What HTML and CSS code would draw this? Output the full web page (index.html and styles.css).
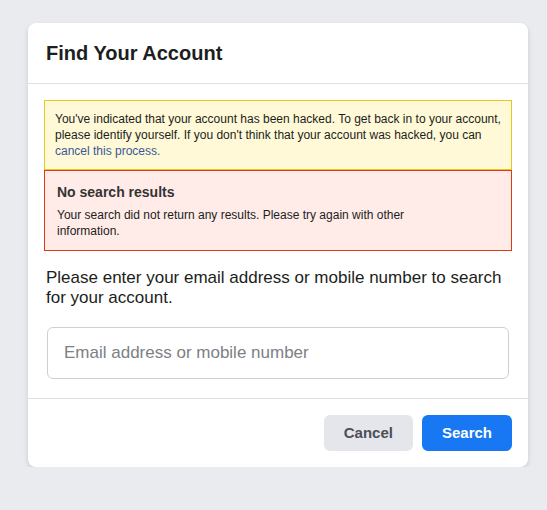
FILE: index.html
```html
<!DOCTYPE html>
<html lang="en">
<head>
<meta charset="utf-8">
<title>Find Your Account</title>
<link rel="stylesheet" href="styles.css">
</head>
<body>
<main class="page">
  <div class="card">
    <div class="card-header">
      <h2 class="title">Find Your Account</h2>
    </div>
    <div class="card-body">
      <div class="box-yellow">
        You've indicated that your account has been hacked. To get back in to your account, please identify yourself. If you don't think that your account was hacked, you can <a class="link" href="#">cancel this process.</a>
      </div>
      <div class="box-red">
        <div class="box-title">No search results</div>
        <div class="box-text">Your search did not return any results. Please try again with other information.</div>
      </div>
      <p class="prompt">Please enter your email address or mobile number to search for your account.</p>
      <div class="field-wrap">
        <input class="field" type="text" placeholder="Email address or mobile number">
      </div>
    </div>
    <div class="card-footer">
      <button class="btn btn-cancel" type="button">Cancel</button>
      <button class="btn btn-search" type="button">Search</button>
    </div>
  </div>
</main>
</body>
</html>
```

FILE: styles.css
```css
html, body {
  margin: 0;
  padding: 0;
}

body {
  background: #e9ebee;
  font-family: "Liberation Sans", Arial, Helvetica, sans-serif;
  color: #1c1e21;
}

.page {
  padding: 23px 0 0 28px;
}

.card {
  width: 500px;
  background: #ffffff;
  border-radius: 8px;
  box-shadow: 0 2px 4px rgba(0, 0, 0, 0.1), 0 4px 10px rgba(0, 0, 0, 0.04);
}

.card-header {
  padding: 18px 16px;
  border-bottom: 1px solid #dddfe2;
}

.title {
  margin: 0;
  font-size: 20px;
  line-height: 24px;
  font-weight: bold;
  color: #1c1e21;
  padding-left: 2px;
}

.card-body {
  padding: 16px 16px 16px;
}

.box-yellow {
  background: #fff9d7;
  border: 1px solid #e2c822;
  padding: 10px;
  font-size: 12px;
  line-height: 16px;
  color: #1c1e21;
}

.link {
  color: #385898;
  text-decoration: none;
}

.box-red {
  background: #ffebe8;
  border: 1px solid #dd3c10;
  padding: 12px 12px 11px;
  color: #1c1e21;
}

.box-title {
  font-size: 14px;
  line-height: 18px;
  font-weight: bold;
  color: #333333;
}

.box-text {
  margin-top: 6px;
  max-width: 380px;
  font-size: 12px;
  line-height: 16px;
}

.prompt {
  margin: 17px 0 0;
  padding: 0 2px;
  font-size: 17px;
  line-height: 20px;
  color: #1c1e21;
}

.field-wrap {
  margin-top: 16px;
  padding: 3px;
}

.field {
  display: block;
  box-sizing: border-box;
  width: 100%;
  height: 52px;
  margin: 0;
  padding: 0 16px;
  border: 1px solid #ccd0d5;
  border-radius: 6px;
  font-family: "Liberation Sans", Arial, Helvetica, sans-serif;
  font-size: 17px;
  color: #1c1e21;
  background: #ffffff;
  outline: none;
}

.field::placeholder {
  color: #7d8085;
}

.card-footer {
  border-top: 1px solid #dddfe2;
  padding: 16px;
  display: flex;
  justify-content: flex-end;
  gap: 9px;
}

.btn {
  height: 36px;
  padding: 0 20px;
  border: none;
  border-radius: 6px;
  font-family: "Liberation Sans", Arial, Helvetica, sans-serif;
  font-size: 15px;
  font-weight: bold;
  line-height: 36px;
  cursor: pointer;
}

.btn-cancel {
  background: #e4e6eb;
  color: #4b4f56;
}

.btn-search {
  background: #1877f2;
  color: #ffffff;
}
```
